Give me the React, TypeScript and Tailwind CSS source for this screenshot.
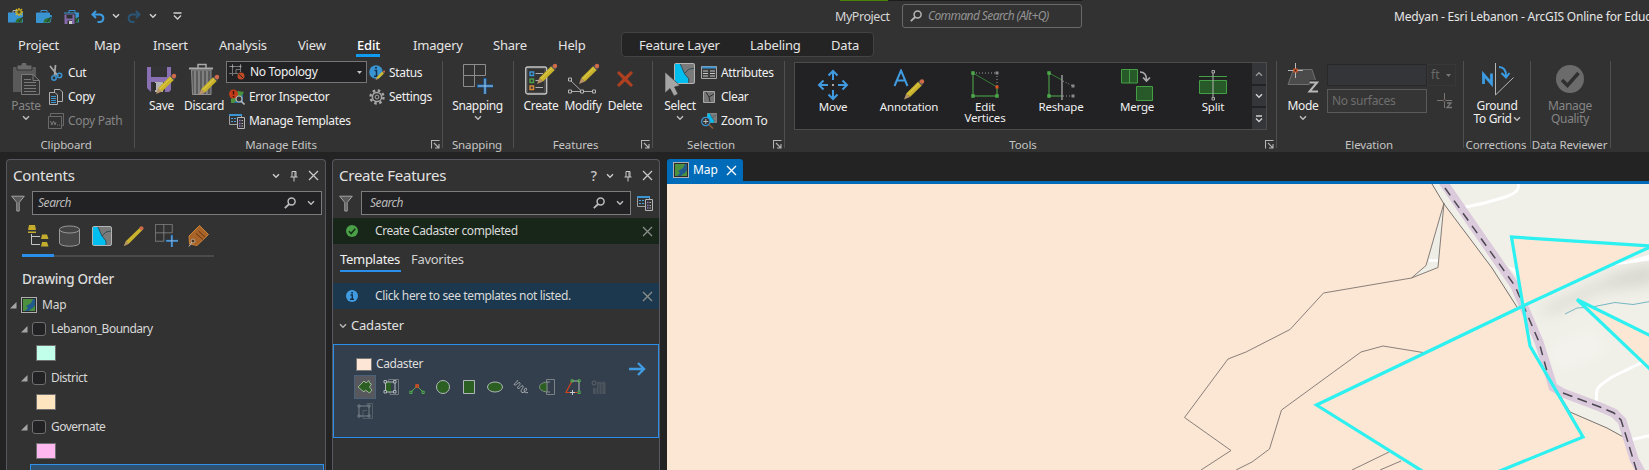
import React from "react";

type Kids = { children?: React.ReactNode };

function Svg({ w, h, className = "", children }: Kids & { w: number; h: number; className?: string }) {
  return (
    <svg width={w} height={h} viewBox={`0 0 ${w} ${h}`} fill="none" className={`shrink-0 ${className}`}>
      {children}
    </svg>
  );
}

/* ---------- shared glyphs ---------- */
const Chevron = ({ className = "" }: { className?: string }) => (
  <Svg w={8} h={6} className={className}>
    <path d="M1 1.2 4 4.2 7 1.2" stroke="currentColor" strokeWidth="1.5" />
  </Svg>
);
const Close = ({ className = "" }: { className?: string }) => (
  <Svg w={11} h={11} className={className}>
    <path d="M1 1 10 10M10 1 1 10" stroke="currentColor" strokeWidth="1.3" />
  </Svg>
);
const Pin = ({ className = "" }: { className?: string }) => (
  <Svg w={8} h={12} className={className}>
    <path d="M2 7V1.5H6V7M5 2V7M.5 7H7.5M4 7V11.5" stroke="currentColor" />
  </Svg>
);
const Magnifier = ({ className = "" }: { className?: string }) => (
  <Svg w={12} h={12} className={className}>
    <circle cx="7.6" cy="4.4" r="3.5" stroke="currentColor" strokeWidth="1.5" />
    <path d="M5.2 7 .8 11.2" stroke="currentColor" strokeWidth="1.8" />
  </Svg>
);
const Funnel = () => (
  <Svg w={14} h={17}>
    <path d="M.7 1.2H13.3L8.2 7.5V16H5.8V7.5Z" fill="#5a5a5a" stroke="#a5a5a5" />
  </Svg>
);
const Pencil = () => (
  <g>
    <path d="M0 20 2.2 14 6 17.6Z" fill="#b9936a" />
    <path d="M2.2 14 14 2.2 17.8 6 6 17.6Z" fill="#c9b32c" />
    <path d="M3.6 15.2 15.4 3.4" stroke="#e2d050" />
    <path d="M14 2.2 15.5 .7 19.3 4.5 17.8 6Z" fill="#55555a" />
    <circle cx="18" cy="2" r="2.2" fill="#cf6a4b" />
  </g>
);
const Launcher = () => (
  <Svg w={9} h={9}>
    <path d="M.5 8.5V.5H8.5M3 3 7.5 7.5M8 4V8H4" stroke="#b5b5b5" strokeWidth="1.1" />
  </Svg>
);
const MapTile = () => (
  <Svg w={16} h={16}>
    <rect x=".5" y=".5" width="15" height="15" fill="#2b2b2b" stroke="#b0b0b0" />
    <path d="M2 2H14V14H2Z" fill="#215a8c" />
    <path d="M2 2H12L10 6 7 8 5 9 7 11 4 14H2ZM14 8V14H8L10 12 12 11Z" fill="#4c9140" />
  </Svg>
);
const MapPiece = ({ s }: { s: number }) => (
  <svg width={s} height={s} viewBox="0 0 20 20" fill="none" className="shrink-0">
    <rect x=".5" y=".5" width="19" height="19" rx="1.5" fill="#7a7a7a" stroke="#b4b4b4" />
    <path d="M1 1H6L10 10 14 15V19H1Z" fill="#00bff0" />
    <path d="M6 1 10 10 14 15V19M10 10 14 6 19 5" stroke="#2c4a55" strokeWidth=".9" />
  </svg>
);
const TemplatesIcon = () => (
  <Svg w={16} h={16}>
    <path d="M.5 1.5H12.5V11.5H.5Z" fill="#333" stroke="#a0a0a0" />
    <path d="M0 1H13V3H0Z" fill="#3b94d2" />
    <path d="M2 5.5H4M5 5.5H7M2 8.5H4M5 8.5H7" stroke="#4aa0dc" strokeWidth="1.2" />
    <path d="M8.5 4.5H15.5V15.5H8.5Z" fill="#333" stroke="#b5b5b5" />
    <path d="M10 7.5H11.5M10 10.5H11.5M10 13H11.5" stroke="#8b6fc0" strokeWidth="1.3" />
    <path d="M12.5 7.5H14M12.5 10.5H14M12.5 13H14" stroke="#b5b5b5" />
  </Svg>
);
const SnapIcon = ({ s = 30 }: { s?: number }) => (
  <svg width={s} height={s} viewBox="0 0 30 30" fill="none" className="shrink-0">
    <path d="M.5 .5H22.5V11.5H.5ZM11.5 .5V22.5M.5 11.5V22.5H11.5" stroke="#8d8d8d" />
    <path d="M22 14V30M14 22H30" stroke="#1465b0" strokeWidth="3" />
    <path d="M22 15V30M15 22H30" stroke="#a8c8e0" />
  </svg>
);

/* ---------- title bar ---------- */
const ProjectIcon = ({ kind }: { kind: "new" | "open" | "save" }) => (
  <Svg w={17} h={17}>
    <path d="M5 5V2.5H11V5" stroke={kind === "new" ? "#aaa" : "#3b94d2"} />
    <path d="M0 4.5H15V14.5H0Z" fill={kind === "open" ? "#2a2a2a" : "#3b94d2"} />
    {kind === "open" && <path d="M.5 14V5H13.5V7M.5 14.5 3 7.5H15.5L14 14.5Z" fill="#3b94d2" stroke="#3b94d2" />}
    <path d="M15 9 9 11 7 14.5H14Z" fill="#2f6f2c" />
    <path d="M15 9 11 14" stroke="#1d3550" />
    {kind === "new" && (
      <g>
        <path d="M11 0V8M7 4H15M8 1 14 7M14 1 8 7" stroke="#d0b62c" strokeWidth="1.4" />
        <circle cx="11" cy="4" r="2.2" fill="#57501f" stroke="#d0b62c" />
      </g>
    )}
    {kind === "save" && (
      <g>
        <path d="M0 6H11V16.5H1L0 15.5Z" fill="#8469a8" stroke="#323232" />
        <path d="M2.5 7H8.5V10.5H2.5ZM3.5 12.5H8V16H3.5Z" fill="#303030" />
        <path d="M5 13H8V16H5Z" fill="#ccc" />
      </g>
    )}
  </Svg>
);

function TitleBar() {
  return (
    <div className="flex h-8 shrink-0 items-start">
      <div className="flex h-8 w-[835px] shrink-0 items-center pl-2">
        <ProjectIcon kind="new" />
        <div className="ml-[11px]"><ProjectIcon kind="open" /></div>
        <div className="ml-[11px]"><ProjectIcon kind="save" /></div>
        <Svg w={14} h={13} className="ml-[10px]">
          <path d="M5 1 1.5 4.5 5 8M1.5 4.5H9A4 3.8 0 0 1 9 12H6.5" stroke="#3b9ae0" strokeWidth="2" />
        </Svg>
        <Chevron className="ml-[7px] text-[#d0d0d0]" />
        <Svg w={14} h={13} className="ml-[7px]">
          <path d="M9 1 12.5 4.5 9 8M12.5 4.5H5A4 3.8 0 0 0 5 12H7.5" stroke="#2b5575" strokeWidth="2" />
        </Svg>
        <Chevron className="ml-[8px] text-[#d0d0d0]" />
        <Svg w={9} h={9} className="ml-4">
          <path d="M.5 1H8.5M1 3.500 4.5 7 8 3.500" stroke="#d0d0d0" strokeWidth="1.3" />
        </Svg>
      </div>
      <div className="flex h-8 w-[67px] shrink-0 flex-col">
        <div className="ml-[5px] h-px w-12 shrink-0 bg-[#498205]" />
        <div className="mt-[7px] text-[12.500px] leading-[18px] tracking-[-0.45px] text-[#d6d6d6]">MyProject</div>
      </div>
      <div className="flex h-8 w-[492px] shrink-0 flex-col">
        <div className="-ml-[14px] h-px w-[194px] shrink-0 bg-[#1c1c1c]" />
        <div className="mt-[3px] flex h-6 w-[180px] items-center rounded-[3px] border border-[#6a6a6a] pl-[7px]">
          <Magnifier className="text-[#b5b5b5]" />
          <span className="ml-[6px] text-[12px] tracking-[-0.6px] text-[#939393] italic">Command Search (Alt+Q)</span>
        </div>
      </div>
      <div className="mt-2 shrink-0 text-[12px] leading-[18px] tracking-[-0.2px] text-[#e6e6e6]">
        Medyan - Esri Lebanon - ArcGIS Online for Education
      </div>
    </div>
  );
}

/* ---------- tabs ---------- */
function Tabs() {
  const t = "flex h-full items-center text-[13px] tracking-[-0.2px] text-[#e4e4e4]";
  return (
    <div className="flex h-[25px] shrink-0">
      <div className={`${t} w-[76px] pt-[2px] pl-[18px]`}>Project</div>
      <div className={`${t} w-[59px] pt-[2px] pl-[18px]`}>Map</div>
      <div className={`${t} w-[66px] pt-[2px] pl-[18px]`}>Insert</div>
      <div className={`${t} w-[79px] pt-[2px] pl-[18px]`}>Analysis</div>
      <div className={`${t} w-[76px] pt-[2px] pl-[18px]`}>View</div>
      <div className={`${t} w-6 border-b-[3px] border-[#0f9bf0] pt-[5px] pl-px font-medium text-white`}>Edit</div>
      <div className={`${t} w-[95px] pt-[2px] pl-[33px]`}>Imagery</div>
      <div className={`${t} w-[65px] pt-[2px] pl-[18px]`}>Share</div>
      <div className={`${t} w-[81px] pt-[2px] pl-[18px]`}>Help</div>
      <div className="flex h-[25px] w-[253px] rounded-[4px] border border-[#434343] bg-[#242424]">
        <div className={`${t} w-[111px] pt-[2px] pl-[17px]`}>Feature Layer</div>
        <div className={`${t} w-[81px] pt-[2px] pl-[17px]`}>Labeling</div>
        <div className={`${t} pt-[2px] pl-[17px]`}>Data</div>
      </div>
    </div>
  );
}

/* ---------- ribbon ---------- */
const small = "text-[12px] tracking-[-0.33px] whitespace-nowrap text-[#f0f0f0]";

function Group({ className, label, launcher, children }: Kids & { className: string; label: string; launcher?: boolean }) {
  return (
    <div className={`flex shrink-0 flex-col border-r border-[#505050] ${className}`}>
      <div className="flex h-[75px] shrink-0">{children}</div>
      <div className="flex h-[13px] shrink-0 items-center pt-[4px] pr-[2px]">
        <div className="grow text-center text-[11.500px] leading-[13px] tracking-[-0.13px] whitespace-nowrap text-[#c4c4c4]">{label}</div>
        {launcher && <div className="ml-1"><Launcher /></div>}
      </div>
    </div>
  );
}

function Big({ className, label, arrow, dim, icon }: { className: string; label: React.ReactNode; arrow?: boolean; dim?: boolean; icon: React.ReactNode }) {
  return (
    <div className={`flex shrink-0 flex-col items-center pt-px ${className}`}>
      <div className="flex h-[34px] items-center">{icon}</div>
      <div className={`mt-[3px] text-center leading-[13px] ${dim ? "text-[12px] tracking-[-0.3px] whitespace-nowrap text-[#858585]" : small}`}>{label}</div>
      {arrow && <Chevron className="mt-[3px] text-[#bdbdbd]" />}
    </div>
  );
}

function Row({ icon, label, dim }: { icon: React.ReactNode; label: string; dim?: boolean }) {
  return (
    <div className="flex h-6 items-center gap-1">
      <div className="flex w-4 justify-center">{icon}</div>
      <span className={dim ? "text-[12px] tracking-[-0.3px] whitespace-nowrap text-[#858585]" : small}>{label}</span>
    </div>
  );
}

const PasteIcon = () => (
  <Svg w={28} h={32}>
    <path d="M1 4H24V29H1Z" fill="#5a5a5a" />
    <path d="M5 2H9A3 3 0 0 1 15 2H20V7H5Z" fill="#6a6a6a" stroke="#323232" />
    <path d="M9.500 11.500H21L27.500 17.500V31.500H9.500Z" fill="#363636" stroke="#7a7a7a" />
    <path d="M21 11.500V17.500H27.500M12 16.500H19M12 19.500H24M12 22.500H24M12 25.500H24M12 28.500H24" stroke="#7a7a7a" />
  </Svg>
);
const CutIcon = () => (
  <Svg w={16} h={16}>
    <path d="M2 1 10 11M7.500 0 6.500 11" stroke="#a8a8a8" strokeWidth="1.8" />
    <circle cx="6" cy="13" r="2.200" stroke="#3b94d2" strokeWidth="1.500" />
    <circle cx="11.500" cy="10.500" r="2.200" stroke="#3b94d2" strokeWidth="1.500" />
  </Svg>
);
const CopyIcon = () => (
  <Svg w={16} h={16}>
    <path d="M6.500 .5H12L14.500 3V12.500H6.500Z" fill="#333" stroke="#b0b0b0" />
    <path d="M1.500 3.500H7L9.500 6V15.500H1.500Z" fill="#333" stroke="#b0b0b0" />
    <path d="M3 7.500H8M3 9.500H8M3 11.500H8M3 13.500H8" stroke="#3b94d2" />
  </Svg>
);
const CopyPathIcon = () => (
  <Svg w={16} h={16}>
    <path d="M2.500 3V.5H15.500V12.500H13" stroke="#6a6a6a" />
    <path d="M.5 3.500H13.500V15.500H.5Z" stroke="#6a6a6a" />
    <path d="M2.500 8 4 12 5.500 8 7 12 8 9M9 12H10M11 12H12" stroke="#777" />
  </Svg>
);
const SaveIcon = () => (
  <Svg w={31} h={32}>
    <path d="M1 4H25V27L23 29H5L1 25Z" fill="#8870b2" />
    <path d="M5 4H21V14H5ZM5 19H19V29H5Z" fill="#343437" />
    <path d="M9 19H17V29H9Z" fill="#b4b4b4" /><path d="M7 20H10V27H7Z" fill="#2e2e2e" />
    <g transform="translate(10 11)"><Pencil /></g>
  </Svg>
);
const DiscardIcon = () => (
  <Svg w={31} h={33}>
    <path d="M9 5V1.500H17V5" stroke="#aaa" strokeWidth="1.500" />
    <path d="M0 5.500H24" stroke="#aaa" strokeWidth="2" />
    <path d="M2.500 7H22V31.500H3.500Z" fill="#5b5b5b" stroke="#8f8f8f" />
    <path d="M6 8V31M10 8V31M14 8V31M18 8V31" stroke="#969696" strokeWidth="1.300" />
    <g transform="translate(10 12)"><Pencil /></g>
  </Svg>
);
const TopologyIcon = () => (
  <Svg w={16} h={16}>
    <path d="M0 2.500H12M0 9.500H9M3.500 0V12M11.500 0V8M7 5.500V9M7 5.500H12" stroke="#777" />
    <circle cx="3.500" cy="2.500" r="1" fill="#aaa" /><circle cx="11.500" cy="2.500" r="1" fill="#aaa" />
    <circle cx="12" cy="12" r="3.500" fill="#c04a26" /><path d="M9.800 10 14 14" stroke="#2b2b2b" />
  </Svg>
);
const ErrorIcon = () => (
  <Svg w={16} h={16}>
    <path d="M3 3H14V14H3Z" fill="#256aa0" /><path d="M9 2 15 3 12 8 9 10 5 14H2V10Z" fill="#4c9140" />
    <circle cx="4.500" cy="5" r="4.500" fill="#c23c1b" /><path d="M4.500 2V5.500M4.500 7V8.300" stroke="#3a120a" strokeWidth="1.500" />
    <circle cx="10" cy="10" r="3" fill="#333" stroke="#b5b5b5" strokeWidth="1.200" /><path d="M12.200 12.200 15.500 15.500" stroke="#b5b5b5" strokeWidth="1.600" />
  </Svg>
);
const StatusIcon = () => (
  <Svg w={16} h={16}>
    <circle cx="7" cy="7" r="6.800" fill="#3b94d2" />
    <path d="M6 2.800H8M5.500 5.500H7.500V11M5 11.200H9.500" stroke="#16324a" strokeWidth="1.500" />
    <g transform="translate(6.500 5.500) scale(.48)"><Pencil /></g>
  </Svg>
);
const GearIcon = () => (
  <Svg w={16} h={16}>
    <circle cx="8" cy="8" r="6.500" stroke="#a5a5a5" strokeWidth="2.400" strokeDasharray="2.550 2.550" />
    <circle cx="8" cy="8" r="4.600" stroke="#a5a5a5" strokeWidth="1.500" />
    <circle cx="8" cy="8" r="1.900" stroke="#a5a5a5" />
  </Svg>
);
const CreateIcon = () => (
  <Svg w={33} h={33}>
    <rect x=".7" y="4" width="21" height="27" rx="2" fill="#4a4a4a" stroke="#c4c4c4" strokeWidth="1.300" />
    <path d="M3 6H19V29H3Z" fill="#343434" />
    <path d="M5 9H8.500V12.500H5Z" stroke="#3b94d2" strokeWidth="1.500" />
    <path d="M5 16H8.500V19.500H5Z" stroke="#4b9b48" strokeWidth="1.500" />
    <path d="M5 23H8.500V26.500H5Z" stroke="#d5873a" strokeWidth="1.500" />
    <path d="M10.500 10.500H18M10.500 17.500H14M10.500 24.500H18" stroke="#b0b0b0" />
    <g transform="translate(12 1)"><Pencil /></g>
  </Svg>
);
const ModifyIcon = () => (
  <Svg w={33} h={33}>
    <path d="M3 17 15 28.500M3 28.500H28" stroke="#aaa" />
    <path d="M1.500 15H4.500V18H1.500ZM1.500 27H4.500V30H1.500ZM13.500 27H16.500V30H13.500ZM25.500 27H28.500V30H25.500Z" fill="#323232" stroke="#b5b5b5" />
    <g transform="translate(12 1)"><Pencil /></g>
  </Svg>
);
const DeleteIcon = () => (
  <Svg w={18} h={18}>
    <path d="M1 3 3 1 9 6.500 15 1 17 3 11.500 9 17 15 15 17 9 11.500 3 17 1 15 6.500 9Z" fill="#ad4020" />
  </Svg>
);
const SelectIcon = () => (
  <Svg w={30} h={33}>
    <svg x="9" y="0" width="21" height="21" viewBox="0 0 20 20"><MapPiece s={20} /></svg>
    <path d="M0 9V30L5 25.500 9 33 13 31 9.500 24 15 22.500Z" fill="#a5a5a5" stroke="#323232" strokeWidth=".6" />
  </Svg>
);
const AttrIcon = () => (
  <Svg w={16} h={14}>
    <path d="M.5 .5H15.500V12.500H.5Z" fill="#3a3a3a" stroke="#a8a8a8" />
    <path d="M1 1.500H15" stroke="#3b94d2" strokeWidth="2" />
    <path d="M2 5H7M2 7.500H7M2 10H7M9 5H14M9 7.500H14M9 10H14" stroke="#c5c5c5" />
  </Svg>
);
const ClearIcon = () => (
  <Svg w={12} h={12}>
    <path d="M.5 .5H11.500V11.500H.5Z" fill="#757575" stroke="#a8a8a8" />
    <path d="M3 1 6 6 7 11M6 6 11 3" stroke="#303030" />
  </Svg>
);
const ZoomIcon = () => (
  <Svg w={16} h={16}>
    <svg x="6" y="0" width="10" height="10" viewBox="0 0 20 20"><MapPiece s={20} /></svg>
    <circle cx="4.800" cy="8.500" r="4.200" fill="#333" stroke="#3b94d2" strokeWidth="1.200" />
    <path d="M4.800 6V11M2.300 8.500H7.300" stroke="#bbb" /><path d="M8 11.500 12 15.500" stroke="#8a5a3a" strokeWidth="1.600" />
  </Svg>
);

/* gallery icons, 32 px square */
const G = "#4fae4c";
const MoveIcon = () => (
  <Svg w={32} h={32}>
    <path d="M16 2V11M16 21V30M2 16H11M21 16H30M11.500 6.500 16 2 20.500 6.500M11.500 25.500 16 30 20.500 25.500M6.500 11.500 2 16 6.500 20.500M25.500 11.500 30 16 25.500 20.500" stroke="#409be0" strokeWidth="2" />
    <path d="M15 15H17V17H15Z" fill="#aaa" />
  </Svg>
);
const AnnoIcon = () => (
  <Svg w={32} h={32}>
    <path d="M1.500 17 8 1.500 14.500 17M4 11.500H12" stroke="#409be0" strokeWidth="2" />
    <g transform="translate(11 10.500)"><Pencil /></g>
  </Svg>
);
const VerticesIcon = () => (
  <Svg w={32} h={32}>
    <path d="M4 4 28 18" stroke="#377a36" /><path d="M4 4V27H28V18" stroke={G} />
    <path d="M4 4H28V18" stroke="#9a9a9a" strokeDasharray="1 2" />
    <path d="M3 3H5V5H3ZM3 26H5V28H3ZM27 26H29V28H27Z" stroke={G} strokeWidth="1.400" />
    <path d="M26.500 2.500H29.500V5.500H26.500Z" fill="#8a8a8a" /><path d="M26.500 16.500H29.500V19.500H26.500Z" fill="#e0511f" />
  </Svg>
);
const ReshapeIcon = () => (
  <Svg w={32} h={32}>
    <path d="M4 4 17 11" stroke="#377a36" /><path d="M4 4V27H17" stroke={G} />
    <path d="M18 12 28 17M18 27H28" stroke="#9a9a9a" strokeDasharray="1 2" />
    <path d="M3 3H5V5H3ZM3 26H5V28H3Z" stroke={G} strokeWidth="1.400" />
    <path d="M17 6V31" stroke="#b8b8b8" strokeWidth="1.200" /><path d="M26.500 15.500H29.500V18.500H26.500ZM26.500 25.500H29.500V28.500H26.500Z" fill="#8a8a8a" />
  </Svg>
);
const MergeIcon = () => (
  <Svg w={34} h={32}>
    <path d="M1.500 .5H17.500V14H1.500ZM16.500 17.500H32.500V31.500H16.500Z" fill="#275a28" stroke="#45a045" />
    <path d="M9.500 .5V14" stroke="#45a045" /><path d="M20 3C25 3 26.500 6 26.500 11M23 8.500 26.500 12 30 8.500" stroke="#aaa" strokeWidth="1.700" />
  </Svg>
);
const SplitIcon = () => (
  <Svg w={32} h={32}>
    <path d="M2.500 11.500H29.500V24.500H2.500Z" fill="#275a28" stroke="#45a045" /><path d="M2 7.500H30" stroke="#45a045" />
    <path d="M16 3V29" stroke="#b5b5b5" /><path d="M15 1.500H17.500V4H15ZM15 28.500H17.500V31H15Z" fill="#333" stroke="#aaa" />
  </Svg>
);

function GalleryItem({ icon, label }: { icon: React.ReactNode; label: React.ReactNode }) {
  return (
    <div className="flex w-[76px] shrink-0 flex-col items-center pt-[6px]">
      {icon}
      <div className="text-center text-[11.500px] leading-[11px] tracking-[-0.2px] text-[#f0f0f0]">{label}</div>
    </div>
  );
}

const ModeIcon = () => (
  <Svg w={32} h={32}>
    <path d="M6.500 6.500H25L30 21.500H1Z" fill="#4b4b4b" stroke="#707070" />
    <path d="M8.500 0V15M1 7.500H16" stroke="#b8b8b8" /><path d="M7 6H10V9H7Z" fill="#333" stroke="#e0511f" strokeWidth="1.200" />
    <path d="M22.500 19.500H30L22.500 28.500H31" stroke="#323232" strokeWidth="5" /><path d="M22.500 19.500H30L22.500 28.500H31" stroke="#b8b8b8" strokeWidth="2" />
  </Svg>
);
const GroundIcon = () => (
  <Svg w={33} h={33}>
    <path d="M2.500 21V11.500L10.500 20.500V10.500" stroke="#3b9ae0" strokeWidth="2.800" />
    <path d="M14.500 0V32L32.500 14.500" stroke="#b5b5b5" />
    <path d="M18 4C23 4 25 8 25 13M20.500 10 25 14.500 28.500 10" stroke="#3b9ae0" strokeWidth="2" />
  </Svg>
);
const QualityIcon = () => (
  <Svg w={28} h={28}>
    <circle cx="14" cy="14" r="14" fill="#6b6b6b" /><path d="M6 15 11.500 20.500 22.500 8" stroke="#303030" strokeWidth="3.500" />
  </Svg>
);

function Ribbon() {
  return (
    <div className="flex h-[95px] shrink-0 pt-1">
      <Group className="h-[87px] w-[135px]" label="Clipboard">
        <Big className="ml-[10px] w-8" icon={<PasteIcon />} label="Paste" dim arrow />
        <div className="ml-[6px] flex flex-col">
          <Row icon={<CutIcon />} label="Cut" />
          <Row icon={<CopyIcon />} label="Copy" />
          <Row icon={<CopyPathIcon />} label="Copy Path" dim />
        </div>
      </Group>
      <Group className="h-[87px] w-[308px]" label="Manage Edits" launcher>
        <Big className="ml-[9px] w-[35px]" icon={<SaveIcon />} label="Save" />
        <Big className="ml-[5px] w-[40px]" icon={<DiscardIcon />} label="Discard" />
        <div className="ml-[2px] flex w-[141px] flex-col">
          <div className="flex h-[22px] w-[141px] items-center border border-[#767676] bg-[#222224] pl-[2px]">
            <TopologyIcon />
            <span className={`ml-[5px] grow ${small}`}>No Topology</span>
            <Svg w={5} h={3} className="mr-1"><path d="M0 0H5L2.500 3Z" fill="#c5c5c5" /></Svg>
          </div>
          <div className="flex flex-col pt-[2px] pl-[3px]">
            <Row icon={<ErrorIcon />} label="Error Inspector" />
            <Row icon={<TemplatesIcon />} label="Manage Templates" />
          </div>
        </div>
        <div className="ml-[2px] flex flex-col">
          <Row icon={<StatusIcon />} label="Status" />
          <Row icon={<GearIcon />} label="Settings" />
        </div>
      </Group>
      <Group className="h-[87px] w-[71px]" label="Snapping">
        <Big className="w-[69px]" icon={<SnapIcon />} label="Snapping" arrow />
      </Group>
      <Group className="h-[87px] w-[139px]" label="Features" launcher>
        <Big className="ml-[8px] w-[38px]" icon={<CreateIcon />} label="Create" />
        <Big className="ml-[3px] w-[40px]" icon={<ModifyIcon />} label="Modify" />
        <Big className="ml-[2px] w-[40px]" icon={<DeleteIcon />} label="Delete" />
      </Group>
      <Group className="h-[87px] w-[132px]" label="Selection" launcher>
        <Big className="ml-[10px] w-[34px]" icon={<SelectIcon />} label="Select" arrow />
        <div className="ml-[4px] flex flex-col">
          <Row icon={<AttrIcon />} label="Attributes" />
          <Row icon={<ClearIcon />} label="Clear" />
          <Row icon={<ZoomIcon />} label="Zoom To" />
        </div>
      </Group>
      <Group className="h-[87px] w-[492px]" label="Tools" launcher>
        <div className="mt-px ml-[9px] flex h-[68px] w-[473px] border border-[#4c4c4c] bg-[#222224]">
          <GalleryItem icon={<MoveIcon />} label="Move" />
          <GalleryItem icon={<AnnoIcon />} label="Annotation" />
          <GalleryItem icon={<VerticesIcon />} label={<>Edit<br />Vertices</>} />
          <GalleryItem icon={<ReshapeIcon />} label="Reshape" />
          <GalleryItem icon={<MergeIcon />} label="Merge" />
          <GalleryItem icon={<SplitIcon />} label="Split" />
          <div className="ml-auto flex w-[14px] flex-col gap-[2px]">
            <div className="flex h-[21px] items-center justify-center bg-[#34363a]"><Chevron className="rotate-180 text-[#949494]" /></div>
            <div className="flex h-5 items-center justify-center bg-[#34363a]"><Chevron className="text-[#d0d0d0]" /></div>
            <div className="flex h-[21px] items-center justify-center bg-[#34363a]">
              <Svg w={8} h={8}><path d="M1 1H7M1 3.500 4 6.500 7 3.500" stroke="#d0d0d0" strokeWidth="1.300" /></Svg>
            </div>
          </div>
        </div>
      </Group>
      <Group className="h-[87px] w-[187px]" label="Elevation">
        <Big className="ml-[8px] w-[36px]" icon={<ModeIcon />} label="Mode" arrow />
        <div className="ml-[6px] flex flex-col pt-[3px]">
          <div className="flex">
            <div className="h-[22px] w-[100px] border border-[#282828] bg-[#343538]" />
            <div className="flex h-[22px] w-[29px] items-center border border-[#383838] pl-[3px] text-[12px] text-[#696969]">
              ft<Svg w={5} h={3} className="ml-[7px]"><path d="M0 0H5L2.500 3Z" fill="#777" /></Svg>
            </div>
          </div>
          <div className="mt-[3px] flex items-center">
            <div className="flex h-6 w-[100px] items-center border border-[#5a5a5a] bg-[#353535] pl-1 text-[12px] tracking-[-0.3px] text-[#6e6e6e]">No surfaces</div>
            <Svg w={16} h={16} className="ml-[10px]">
              <path d="M7.500 0V15M0 7.500H15" stroke="#777" /><circle cx="7.500" cy="7.500" r="1.200" fill="#333" stroke="#6a5a56" />
              <path d="M9 8.500H16V16H9Z" fill="#323232" /><path d="M10 10H14L10 14.500H15" stroke="#777" strokeWidth="1.300" />
            </Svg>
          </div>
        </div>
      </Group>
      <Group className="h-[87px] w-[67px]" label="Corrections">
        <Big className="w-[66px]" icon={<GroundIcon />} label={<>Ground<br /><span className="flex items-center justify-center">To Grid<Chevron className="ml-px text-[#bdbdbd]" /></span></>} />
      </Group>
      <Group className="h-[87px] w-[80px]" label="Data Reviewer">
        <Big className="w-[78px]" icon={<QualityIcon />} label={<>Manage<br />Quality</>} dim />
      </Group>
    </div>
  );
}

/* ---------- contents panel ---------- */
function LayerRow({ name, swatch }: { name: string; swatch: string }) {
  return (
    <div className="flex h-[49px] shrink-0 flex-col pl-[14px]">
      <div className="flex h-[22px] items-center">
        <Svg w={7} h={7}><path d="M6.500 0V6.500H0Z" fill="#a5a5a5" /></Svg>
        <div className="ml-[4px] h-[14px] w-[14px] rounded-[3px] border border-[#6f6f6f] bg-[#222224]" />
        <span className="ml-[5px] text-[12px] tracking-[-0.5px] text-[#d8d8d8]">{name}</span>
      </div>
      <div className={`mt-[5px] ml-[15px] h-4 w-5 border border-[#6e6e6e] ${swatch}`} />
    </div>
  );
}

const iconTabs = (
  <>
    <Svg w={22} h={22}>
      <path d="M4.500 9V19.500H13M4.500 11.500H13" stroke="#c5c5c5" />
      <path d="M2 0H8L9 5H1ZM1 6.500H9V8H1ZM15 9.500H20L21.500 14H14ZM15 17H20L21.500 21.500H14Z" fill="#c4ad2c" />
    </Svg>
    <Svg w={21} h={22} className="ml-[10px]">
      <path d="M.5 4V18C.5 22.300 20.500 22.300 20.500 18V4" fill="#484848" stroke="#9a9a9a" />
      <ellipse cx="10.500" cy="4.500" rx="10" ry="3.500" fill="#444" stroke="#9a9a9a" />
    </Svg>
    <div className="ml-3"><MapPiece s={20} /></div>
    <Svg w={20} h={20} className="ml-3">
      <path d="M0 20 2 15 16 1.500 18.500 4 5 17.500Z" fill="#c9b32c" /><path d="M0 20 2 15 5 17.500Z" fill="#b9936a" />
      <circle cx="17.500" cy="2.300" r="2" fill="#cf6a4b" />
    </Svg>
    <div className="ml-[11px]"><SnapIcon s={23} /></div>
    <Svg w={22} h={22} className="ml-[10px]">
      <path d="M11.500 .5 20.500 9.500 9 20.500 1.500 19 1 11Z" fill="#a86328" stroke="#c88236" />
      <path d="M8 8.500 15 14.500M10.500 6 17 12" stroke="#633612" /><circle cx="5" cy="16" r="2" fill="#4a3626" stroke="#c5a483" />
      <path d="M4 17 1 21.500" stroke="#bbb" />
    </Svg>
  </>
);

function Contents() {
  return (
    <div className="ml-[6px] flex h-[311px] w-80 shrink-0 flex-col overflow-hidden rounded-t-[4px] border border-b-0 border-[#575760] bg-[#323232]">
      <div className="flex h-[31px] shrink-0 items-center pl-[6px] text-[#c8c8c8]">
        <span className="grow text-[15px] tracking-[-0.25px] text-[#e2e2e2]">Contents</span>
        <Chevron className="mr-[10px]" /><Pin className="mr-[10px]" /><Close className="mr-[6px]" />
      </div>
      <div className="flex h-6 shrink-0 items-center pl-1">
        <Funnel />
        <div className="ml-[7px] flex h-6 w-[290px] items-center border border-[#7c7c7c] bg-[#222224] pl-[5px] text-[#bababa]">
          <span className="grow text-[12px] tracking-[-0.45px] italic">Search</span>
          <Magnifier className="mr-[11px]" /><Chevron className="mr-[6px]" />
        </div>
      </div>
      <div className="mt-[9px] flex h-[23px] shrink-0 items-center pl-5">{iconTabs}</div>
      <div className="mt-[7px] ml-[15px] flex h-[3px] w-48 shrink-0 items-center">
        <div className="h-[3px] w-8 bg-[#2a8fea]" /><div className="h-[2px] grow bg-[#4a4a4a]" />
      </div>
      <div className="mt-[11px] h-[22px] shrink-0 pl-[15px] text-[13.500px] leading-[22px] font-medium tracking-[-0.3px] text-[#dcdcdc]">Drawing Order</div>
      <div className="mt-1 flex h-[22px] shrink-0 items-center pl-[3px]">
        <Svg w={7} h={7}><path d="M6.500 0V6.500H0Z" fill="#a5a5a5" /></Svg>
        <div className="ml-[4px]"><MapTile /></div>
        <span className="ml-[5px] text-[12px] tracking-[-0.2px] text-[#d8d8d8]">Map</span>
      </div>
      <div className="mt-[2px] flex shrink-0 flex-col">
        <LayerRow name="Lebanon_Boundary" swatch="bg-[#c2ffea]" />
        <LayerRow name="District" swatch="bg-[#ffe4c0]" />
        <LayerRow name="Governate" swatch="bg-[#ffb7ef]" />
      </div>
      <div className="-mt-[1px] ml-[23px] h-[10px] w-[294px] shrink-0 border border-[#2f92ea] bg-[#2f5272]" />
    </div>
  );
}

/* ---------- create features panel ---------- */
const N = "#b0b5b9";
const tools: React.ReactNode[] = [
  <Svg w={16} h={16}><path d="M1 8 7 2 9 4 12 1.500 12.500 4 14.500 5 12.500 8 15 11 12.500 14 8.500 11 7 13Z" fill="#2b6022" stroke="#9db197" /></Svg>,
  <Svg w={16} h={16}><path d="M5.500 .5H15.500V15.500H7V13M5.500 3V.5" stroke="#71777c" /><path d="M2 3H8V13H2Z" fill="#2b6022" /><path d="M2.500 3V13M2 3H12V13H2" stroke={N} /><path d="M1 1.500H3.500V4H1ZM1 11.500H3.500V14H1ZM10.500 1.500H13V4H10.500ZM10.500 11.500H13V14H10.500Z" fill="#33404c" stroke={N} /></Svg>,
  <Svg w={16} h={16}><path d="M2 13 8 7 14 13" stroke={G} /><path d="M.8 12.200H3V14.500H.8ZM13 12.200H15.200V14.500H13Z" stroke={G} /><path d="M7 6H9.200V8.200H7Z" fill="#33404c" stroke="#e0511f" strokeWidth="1.300" /></Svg>,
  <Svg w={16} h={16}><circle cx="8" cy="8" r="6.500" fill="#2b6022" stroke={N} /></Svg>,
  <Svg w={16} h={16}><path d="M2.500 1.500H13.500V14.500H2.500Z" fill="#2b6022" stroke={N} /></Svg>,
  <Svg w={16} h={16}><ellipse cx="8" cy="8" rx="7.500" ry="5" fill="#2b6022" stroke={N} /></Svg>,
  <Svg w={16} h={16}><path d="M4 1C6 3 0 4 1.500 6 3 7 6 2 7 4 8 6 3 8 5 9.500 7 10 9 5 10 7 11 9 6 12 9 13.500 12 14 15 10 13 9 10.500 9 10 15 15 13.500" stroke={N} strokeWidth=".9" /></Svg>,
  <Svg w={16} h={16}><path d="M7.500 3V.5H15.500V15.500H7.500V13" stroke="#7b8186" /><path d="M8 3C-2 4-2 12 8 13Z" fill="#2b6022" /><path d="M8 3C-2 4-2 12 8 13" stroke="#85908a" /><path d="M11 3H8V13H11" stroke="#8b8f92" /></Svg>,
  <Svg w={16} h={16}><path d="M7 2 1 13.500H5M10 13.500H13" stroke="#cf4320" strokeWidth="1.200" /><path d="M7 2H14V12" stroke={N} /><path d="M6 .8H8.300V3H6ZM13 .8H15.200V3H13ZM13 12.200H15.200V14.500H13Z" stroke={G} /><path d="M7.500 11V16M5 13.500H10" stroke="#c8ccd0" /></Svg>,
  <Svg w={16} h={16}><circle cx="3" cy="4" r="2" stroke="#5c646b" /><path d="M6 3H10L11 4 12 2 14.500 4V15H2V9H6Z" fill="#4b545d" /><path d="M5 9V15M8 5V15M11 5V15" stroke="#37424e" /></Svg>,
];

const Notice = ({ className, icon, text }: { className: string; icon: React.ReactNode; text: string }) => (
  <div className={`flex h-[26px] shrink-0 items-center pl-[13px] ${className}`}>
    {icon}
    <span className="ml-[17px] grow text-[12px] text-[#dadada]">{text}</span>
    <Close className="mr-[6px] text-[#8a8f8c]" />
  </div>
);

function CreateFeatures() {
  return (
    <div className="ml-[6px] flex h-[311px] w-[328px] shrink-0 flex-col overflow-hidden rounded-t-[4px] border border-b-0 border-[#575760] bg-[#323232]">
      <div className="flex h-[31px] shrink-0 items-center pl-[6px] text-[#c8c8c8]">
        <span className="grow text-[15px] tracking-[-0.25px] text-[#e2e2e2]">Create Features</span>
        <span className="mr-[9px] text-[14px] font-medium">?</span>
        <Chevron className="mr-[10px]" /><Pin className="mr-[10px]" /><Close className="mr-[6px]" />
      </div>
      <div className="flex h-6 shrink-0 items-center pl-[6px]">
        <Funnel />
        <div className="ml-[8px] flex h-6 w-[270px] items-center border border-[#7c7c7c] bg-[#222224] pl-2 text-[#bababa]">
          <span className="grow text-[12px] tracking-[-0.45px] italic">Search</span>
          <Magnifier className="mr-[11px]" /><Chevron className="mr-[6px]" />
        </div>
        <div className="ml-[6px]"><TemplatesIcon /></div>
      </div>
      <Notice
        className="mt-[3px] bg-[#182619] tracking-[-0.43px]"
        text="Create Cadaster completed"
        icon={<Svg w={12} h={12}><circle cx="6" cy="6" r="6" fill="#4ba148" /><path d="M3 6.200 5.200 8.500 9.200 3.800" stroke="#163016" strokeWidth="1.600" /></Svg>}
      />
      <div className="flex h-[39px] shrink-0 pt-[5px] pl-[7px] text-[13px] leading-[20px] tracking-[-0.3px]">
        <div className="h-[23px] w-[61px] border-b-2 border-[#2a8fea] text-[#f0f0f0]">Templates</div>
        <div className="ml-[10px] text-[#d0d0d0]">Favorites</div>
      </div>
      <Notice
        className="bg-[#1b384e] tracking-[-0.37px]"
        text="Click here to see templates not listed."
        icon={<Svg w={12} h={12}><circle cx="6" cy="6" r="6" fill="#409be0" /><path d="M5.200 2.800H7M4.500 5H6.300V9M4 9.300H8" stroke="#14304a" strokeWidth="1.400" /></Svg>}
      />
      <div className="flex h-[35px] shrink-0 items-center pb-[2px] pl-[6px]">
        <Chevron className="text-[#b5b5b5]" />
        <span className="ml-[4px] text-[13px] tracking-[-0.2px] text-[#e0e0e0]">Cadaster</span>
      </div>
      <div className="flex h-[94px] shrink-0 flex-col border border-[#2a8fea] bg-[#333f4c] pl-5">
        <div className="mt-2 flex h-[22px] items-center pr-3">
          <div className="ml-[2px] h-[13px] w-4 border border-[#777] bg-[#fde6d5]" />
          <span className="ml-[4px] grow text-[12px] tracking-[-0.4px] text-[#dedede]">Cadaster</span>
          <Svg w={17} h={14} className="mt-[9px]"><path d="M0 7H15M9 1 15 7 9 13" stroke="#409be0" strokeWidth="2.400" /></Svg>
        </div>
        <div className="flex h-6 gap-1">
          {tools.map((icon, i) => (
            <div key={i} className={i === 0 ? "flex h-6 w-[22px] items-center justify-center border border-[#4a6178] bg-[#57585d]" : "flex h-6 w-[22px] items-center justify-center"}>{icon}</div>
          ))}
        </div>
        <div className="flex h-6 w-[22px] items-center justify-center">
          <Svg w={16} h={16}>
            <path d="M10 2V.5H15.500V15.500H6V7.500H10" stroke="#545e67" /><path d="M2 3H12V13H2Z" stroke="#77808a" />
            <path d="M1 2H3V4H1ZM11 2H13V4H11ZM1 12H3V14H1ZM11 12H13V14H11Z" fill="#33404c" stroke="#77808a" />
          </Svg>
        </div>
      </div>
    </div>
  );
}

/* ---------- map view ---------- */
function MapView() {
  const peach = "#fce6d4";
  const purple = "M1443 182 1515 286 1521 300 1539 342 1550 377 1553 387 1563 393 1600 407 1614 413 1622 421 1630 446 1634 459 1642 474";
  return (
    <div className="ml-[7px] flex h-[311px] w-[982px] shrink-0 flex-col">
      <div className="flex h-[22px] w-[76px] items-center rounded-t-[3px] bg-[#006bb8] pl-[6px] text-white">
        <MapTile />
        <span className="ml-1 grow text-[12px] tracking-[-0.1px]">Map</span>
        <Close className="mr-[6px]" />
      </div>
      <div className="h-[3px] w-full bg-[#006bb8]" />
      <svg width="982" height="286" viewBox="667 184 982 286" fill="none" className="shrink-0">
        <defs>
          <filter id="soft" x="-50%" y="-50%" width="200%" height="200%"><feGaussianBlur stdDeviation="7" /></filter>
        </defs>
        <rect x="667" y="184" width="982" height="286" fill="#f0efe8" />
        <path d="M1535 312 1565 298 1620 272 1655 262V284L1600 290 1555 312Z" fill="#d9d8cf" filter="url(#soft)" />
        <path d="M1545 350 1590 330 1610 350 1560 370Z" fill="#f4f3ed" filter="url(#soft)" />
        <path d="M1518.500 183C1519 190 1517 192 1508 196 1495 201 1480 204 1462 208" stroke="#fff" strokeWidth="3" />
        <path d="M1645 361 1612 377C1600 385 1596 388 1596.500 394V404M1630 440 1652 435" stroke="#fff" strokeWidth="3" />
        <path d="M1612 265 1652 254V260L1625 264Z" fill="#fff" />
        <path d="M1508 266 1520 271 1522 282Z" fill="#fff" />
        <path d="M1565 314 1577 308 1592 307 1615 302.500 1633 304.500 1650 301.500" stroke="#76b7c1" />
        <path d="M667 184H1432L1444 204 1492 268 1517 307 1523 306 1530 346 1570 413 1607 428 1627 439 1636 470H667Z" fill={peach} />
        <path d="M1432 184 1444 204 1492 268 1517 307M1530 346 1570 412 1607 428 1627 439 1636 470" stroke="#6a6560" strokeWidth=".9" />
        <path d={purple} stroke="#dacadb" strokeWidth="9" />
        <path d="M1445 188 1515 286 1521 300 1539 342 1548 375" stroke="#4c4750" strokeWidth="1.500" strokeDasharray="9 6.500" />
        <path d="M1563 393 1600 407 1614 413 1621 420 1627 439 1637 472" stroke="#4c4750" strokeWidth="1.500" strokeDasharray="10 5.500" />
        <path d="M1444 203 1438 267.500 1411.500 278 1426 265.500Z" fill="#eeede6" stroke="#77716c" strokeWidth=".9" />
        <path d="M1429 260.500H1438" stroke="#fff" strokeWidth="2.500" />
        <path d="M1411.500 278 1323.500 293 1290 329.500 1246 352 1228 359 1184.500 417.500 1231 450.500 1201 470M1423 352.500 1383 346 1361 352 1281.500 410 1269.500 449 1252 462 1236 470M1389 452 1352 470M1401 461 1380 470" stroke="#7d746e" strokeWidth=".9" />
        <path d="M1511.500 237 1650 246.500 1523 306Z" fill={peach} />
        <path d="M1577 299.500 1652 336V372Z" fill={peach} />
        <g stroke="#2cf1f0" strokeWidth="3.200">
          <path d="M1427 474 1316.500 405 1523 306 1652 246 1511.500 237 1523 306 1530 346 1583 437 1495 473" />
          <path d="M1652 336.500 1577 299.500 1652 371" />
        </g>
      </svg>
    </div>
  );
}

export default function App() {
  return (
    <div className="flex h-[470px] w-[1649px] flex-col overflow-hidden bg-[#323232] font-['Noto_Sans','Open_Sans',sans-serif] whitespace-nowrap select-none">
      <TitleBar />
      <Tabs />
      <Ribbon />
      <div className="flex grow items-start bg-[#232323] pt-[7px]">
        <Contents />
        <CreateFeatures />
        <MapView />
      </div>
    </div>
  );
}
